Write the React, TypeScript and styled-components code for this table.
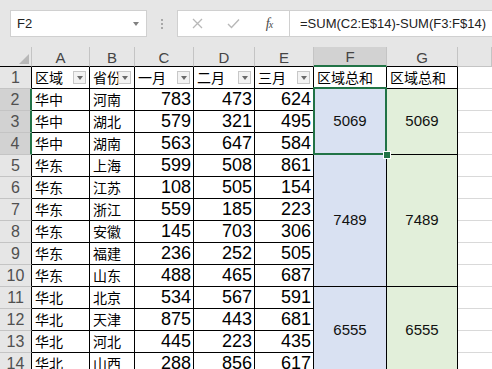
import React from 'react';
import styled, { createGlobalStyle } from 'styled-components';

const Global = createGlobalStyle`
  html, body { margin: 0; padding: 0; background: #fff; overflow: hidden; }
  body { font-family: "Liberation Sans", "Noto Sans CJK SC", sans-serif; }
  * { box-sizing: border-box; }
`;

const GREEN = '#217346';

const Page = styled.div`
  width: 492px;
  height: 369px;
  overflow: hidden;
  background: #fff;
  display: flex;
  flex-direction: column;
`;

const TopBar = styled.div`
  flex-shrink: 0;
  height: 47px;
  background: #e6e6e6;
  display: flex;
  align-items: flex-start;
  padding: 10px 0 0 10px;
`;

const NameBox = styled.div`
  width: 137px;
  height: 27px;
  background: #fff;
  border: 1px solid #d0d0d0;
  display: flex;
  align-items: center;
  justify-content: space-between;
  padding: 0 7px 0 6px;
  font-size: 13px;
  color: #222;
`;

const DropArrow = styled.span`
  width: 0;
  height: 0;
  border-left: 3px solid transparent;
  border-right: 3px solid transparent;
  border-top: 4px solid #808080;
`;

const DotsWrap = styled.div`
  width: 30px;
  height: 27px;
  display: flex;
  flex-direction: column;
  align-items: center;
  justify-content: center;
  gap: 2px;
`;

const Dot = styled.span`
  width: 2px;
  height: 2px;
  background: #a8a8a8;
`;

const ActionBox = styled.div`
  width: 112px;
  height: 27px;
  background: #fff;
  border: 1px solid #d0d0d0;
  border-right: none;
  display: flex;
  align-items: center;
  padding-left: 1px;
`;

const ActionItem = styled.div`
  width: 36px;
  height: 100%;
  display: flex;
  align-items: center;
  justify-content: center;
`;

const Fx = styled.span`
  font-family: "Liberation Serif", serif;
  font-style: italic;
  font-size: 14px;
  color: #4a4a4a;
  letter-spacing: -1px;
  & > small { font-size: 10px; }
`;

const FormulaBox = styled.div`
  flex: 1;
  height: 27px;
  background: #fff;
  border: 1px solid #d0d0d0;
  border-right: none;
  display: flex;
  align-items: center;
  padding-left: 10px;
  font-size: 13px;
  color: #222;
  white-space: nowrap;
`;

const Sheet = styled.div`
  display: grid;
  grid-template-columns: 32px 58px 45px 59px 61px 59px 73px 71px 1fr;
  grid-template-rows: 20px repeat(14, 22px);
  background: #fff;
`;

const Corner = styled.div`
  position: relative;
  background: #e6e6e6;
  border-right: 1px solid #c4c4c4;
  border-bottom: 1px solid #000;
  &::after {
    content: '';
    position: absolute;
    right: 2px;
    bottom: 2px;
    width: 0;
    height: 0;
    border-left: 10px solid transparent;
    border-bottom: 10px solid #b8b8b8;
  }
`;

const ColHeader = styled.div<{ $selected?: boolean; $outside?: boolean }>`
  background: ${(p) => (p.$selected ? '#d2d2d2' : '#e6e6e6')};
  border-right: 1px solid #c4c4c4;
  border-bottom: ${(p) =>
    p.$selected ? `2px solid ${GREEN}` : p.$outside ? '1px solid #c4c4c4' : '1px solid #000'};
  display: flex;
  align-items: center;
  justify-content: center;
  font-size: 15px;
  color: #444;
  padding-top: 1px;
`;

const RowHeader = styled.div<{ $selected?: boolean }>`
  background: ${(p) => (p.$selected ? '#d2d2d2' : '#e6e6e6')};
  border-right: ${(p) => (p.$selected ? `2px solid ${GREEN}` : '1px solid #000')};
  border-bottom: 1px solid #c4c4c4;
  display: flex;
  align-items: center;
  justify-content: center;
  font-size: 16px;
  color: #505050;
`;

const Cell = styled.div<{ $num?: boolean }>`
  position: relative;
  border-right: 1px solid #000;
  border-bottom: 1px solid #000;
  display: flex;
  align-items: center;
  justify-content: ${(p) => (p.$num ? 'flex-end' : 'flex-start')};
  padding: ${(p) => (p.$num ? '0 2px 1px 0' : '0 0 1px 3px')};
  font-size: ${(p) => (p.$num ? '18px' : '14px')};
  color: #000;
  white-space: nowrap;
  overflow: visible;
`;

const FilterButton = styled.span`
  position: absolute;
  right: 3px;
  top: 4px;
  width: 13px;
  height: 13px;
  background: #f3f3f3;
  border: 1px solid #c8c8c8;
  display: flex;
  align-items: center;
  justify-content: center;
  &::after {
    content: '';
    width: 0;
    height: 0;
    border-left: 3px solid transparent;
    border-right: 3px solid transparent;
    border-top: 4px solid #6a6a6a;
  }
`;

const Merged = styled.div<{ $span: number; $fill: string; $selected?: boolean }>`
  position: relative;
  grid-row: span ${(p) => p.$span};
  background: ${(p) => p.$fill};
  border-right: 1px solid #000;
  border-bottom: 1px solid #000;
  display: flex;
  align-items: center;
  justify-content: center;
  padding-bottom: 3px;
  font-size: 15px;
  color: #111;
  z-index: ${(p) => (p.$selected ? 2 : 0)};
  &::before {
    content: '';
    display: ${(p) => (p.$selected ? 'block' : 'none')};
    position: absolute;
    top: -2px;
    left: -1px;
    right: -1px;
    bottom: -1px;
    border: 2px solid ${GREEN};
  }
  &::after {
    content: '';
    display: ${(p) => (p.$selected ? 'block' : 'none')};
    position: absolute;
    right: -4px;
    bottom: -4px;
    width: 6px;
    height: 6px;
    background: ${GREEN};
    outline: 1px solid #fff;
  }
`;

const Blank = styled.div`
  border-bottom: 1px solid #d9d9d9;
`;

const rows: [string, string, number, number, number][] = [
  ['华中', '河南', 783, 473, 624],
  ['华中', '湖北', 579, 321, 495],
  ['华中', '湖南', 563, 647, 584],
  ['华东', '上海', 599, 508, 861],
  ['华东', '江苏', 108, 505, 154],
  ['华东', '浙江', 559, 185, 223],
  ['华东', '安徽', 145, 703, 306],
  ['华东', '福建', 236, 252, 505],
  ['华东', '山东', 488, 465, 687],
  ['华北', '北京', 534, 567, 591],
  ['华北', '天津', 875, 443, 681],
  ['华北', '河北', 445, 223, 435],
  ['华北', '山西', 288, 856, 617],
];

const merges: Record<number, { span: number; value: number }> = {
  0: { span: 3, value: 5069 },
  3: { span: 6, value: 7489 },
  9: { span: 4, value: 6555 },
};

const columns = ['A', 'B', 'C', 'D', 'E', 'F', 'G'];
const headers = ['区域', '省份', '一月', '二月', '三月'];

export default function App() {
  return (
    <Page>
      <Global />
      <TopBar>
        <NameBox>
          <span>F2</span>
          <DropArrow />
        </NameBox>
        <DotsWrap>
          <Dot />
          <Dot />
          <Dot />
        </DotsWrap>
        <ActionBox>
          <ActionItem>
            <svg width="11" height="11" viewBox="0 0 11 11">
              <path d="M1 1L10 10M10 1L1 10" stroke="#b8b8b8" strokeWidth="1.3" fill="none" />
            </svg>
          </ActionItem>
          <ActionItem>
            <svg width="13" height="11" viewBox="0 0 13 11">
              <path d="M1 6L4.5 9.5L12 1.5" stroke="#b8b8b8" strokeWidth="1.4" fill="none" />
            </svg>
          </ActionItem>
          <ActionItem>
            <Fx>
              f<small>x</small>
            </Fx>
          </ActionItem>
        </ActionBox>
        <FormulaBox>=SUM(C2:E$14)-SUM(F3:F$14)</FormulaBox>
      </TopBar>
      <Sheet>
        <Corner />
        {columns.map((c) => (
          <ColHeader key={c} $selected={c === 'F'}>
            {c}
          </ColHeader>
        ))}
        <ColHeader $outside />

        <RowHeader>1</RowHeader>
        {headers.map((h) => (
          <Cell key={h}>
            {h}
            <FilterButton />
          </Cell>
        ))}
        <Cell>区域总和</Cell>
        <Cell>区域总和</Cell>
        <Blank />

        {rows.map((r, i) => {
          const m = merges[i];
          return (
            <React.Fragment key={i}>
              <RowHeader $selected={i < 3}>{i + 2}</RowHeader>
              <Cell>{r[0]}</Cell>
              <Cell>{r[1]}</Cell>
              <Cell $num>{r[2]}</Cell>
              <Cell $num>{r[3]}</Cell>
              <Cell $num>{r[4]}</Cell>
              {m && (
                <>
                  <Merged $span={m.span} $fill="#d9e1f2" $selected={i === 0}>
                    {m.value}
                  </Merged>
                  <Merged $span={m.span} $fill="#e2efda">
                    {m.value}
                  </Merged>
                </>
              )}
              <Blank />
            </React.Fragment>
          );
        })}
      </Sheet>
    </Page>
  );
}
